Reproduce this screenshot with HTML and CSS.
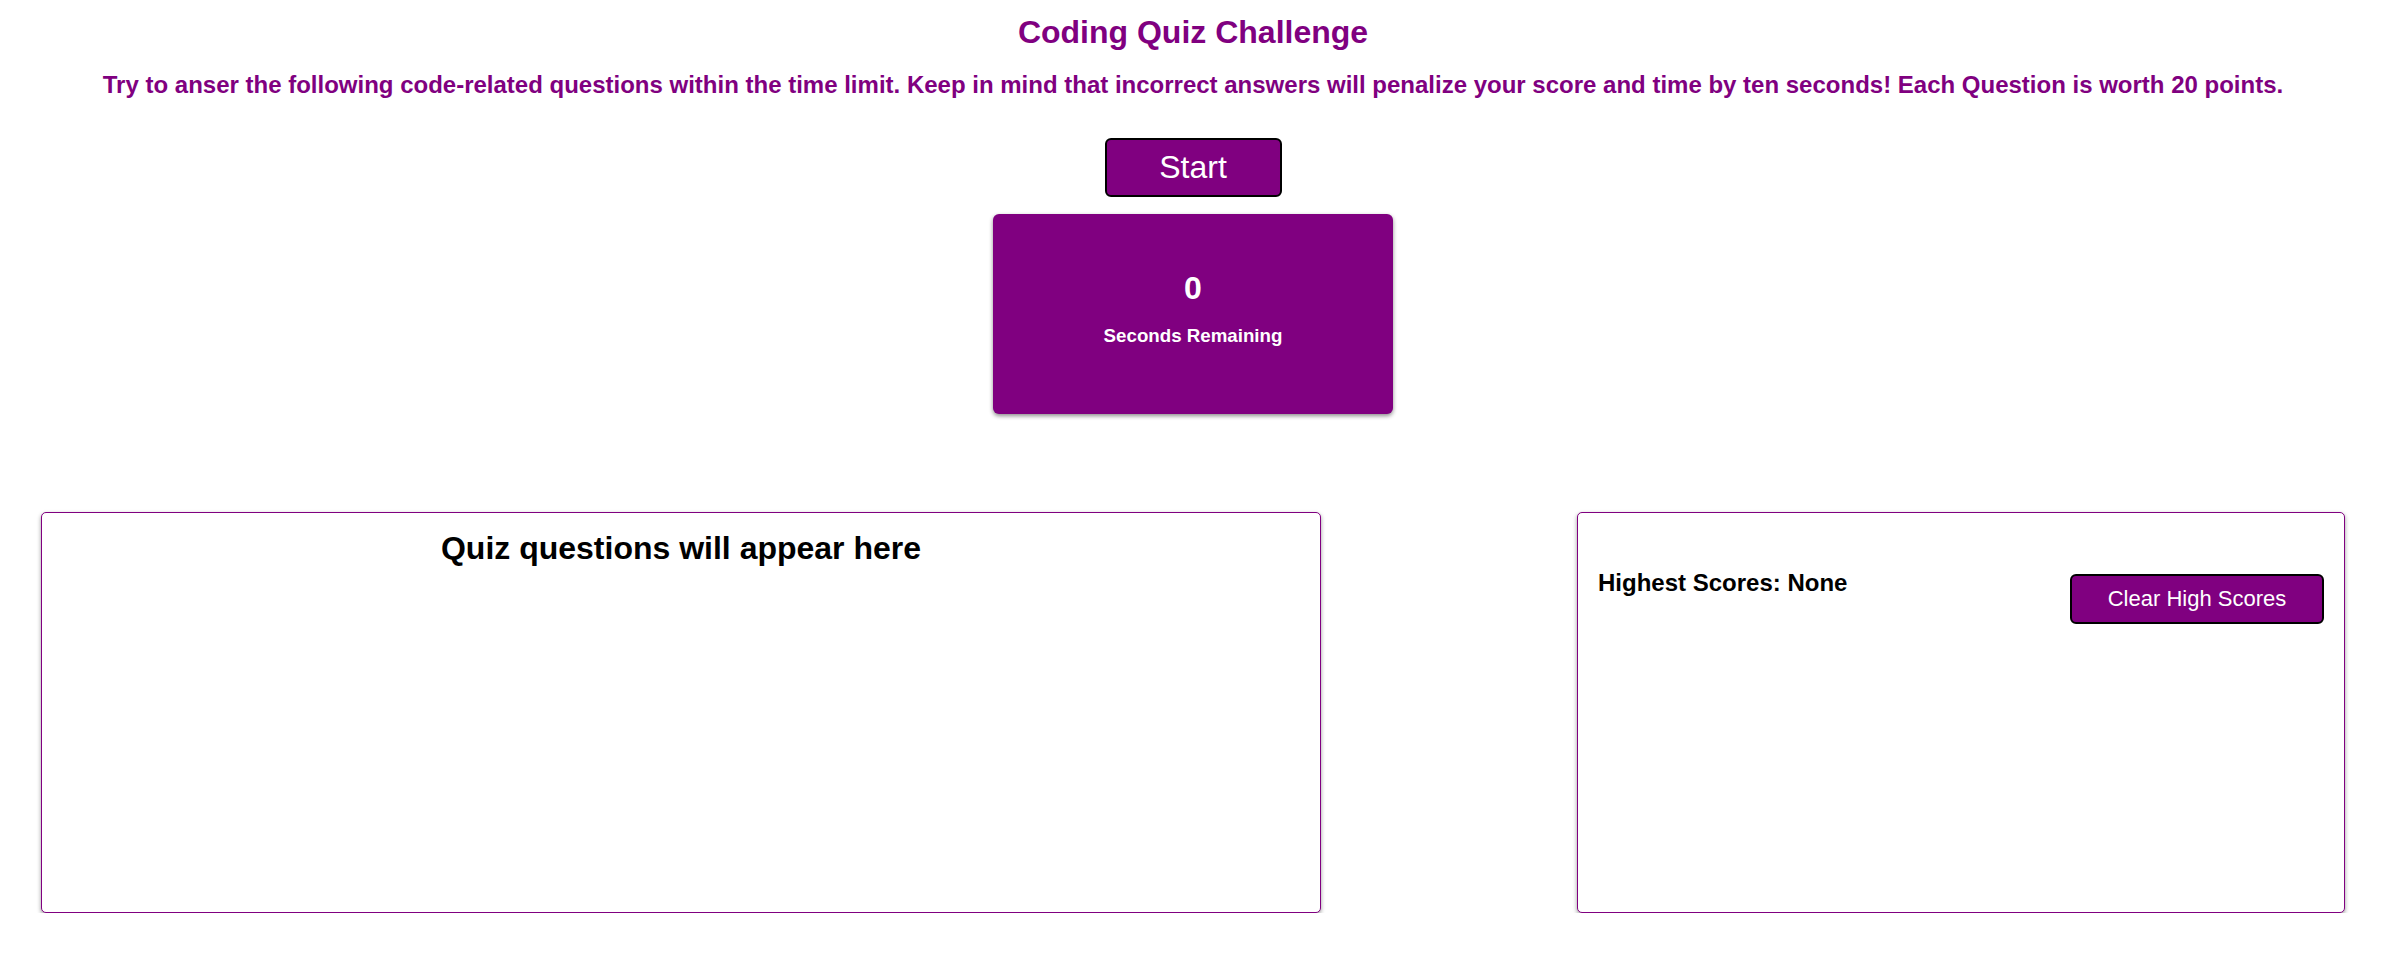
FILE: index.html
```html
<!DOCTYPE html>
<html lang="en">
<head>
<meta charset="utf-8">
<title>Coding Quiz Challenge</title>
<link rel="stylesheet" href="styles.css">
</head>
<body>
<header class="intro">
  <h1 class="title">Coding Quiz Challenge</h1>
  <p class="subtitle">Try to anser the following code-related questions within the time limit. Keep in mind that incorrect answers will penalize your score and time by ten seconds! Each Question is worth 20 points.</p>
  <button class="start-btn">Start</button>
  <div class="timer">
    <div class="timer-count">0</div>
    <div class="timer-label">Seconds Remaining</div>
  </div>
</header>
<main class="panels">
  <section class="quiz-box">
    <h2 class="quiz-heading">Quiz questions will appear here</h2>
  </section>
  <section class="scores-box">
    <h3 class="scores-heading">Highest Scores: None</h3>
    <button class="clear-btn">Clear High Scores</button>
  </section>
</main>
</body>
</html>
```
FILE: styles.css
```css
* { box-sizing: border-box; }

body {
  margin: 0;
  font-family: "Liberation Sans", Arial, sans-serif;
  color: #000;
  background: #fff;
}

.intro {
  display: flex;
  flex-direction: column;
  align-items: center;
  padding-right: 6px;
}

.title {
  margin: 14px 0 0;
  font-size: 32px;
  font-weight: bold;
  color: #800080;
  line-height: 37px;
}

.subtitle {
  margin: 20px 0 0;
  font-size: 24px;
  font-weight: bold;
  color: #800080;
  line-height: 28px;
  white-space: nowrap;
}

.start-btn {
  margin-top: 39px;
  width: 177px;
  height: 59px;
  padding: 0;
  font-family: "Liberation Sans", Arial, sans-serif;
  font-size: 32px;
  color: #fff;
  background: #800080;
  border: 2px solid #000;
  border-radius: 6px;
}

.timer {
  margin-top: 17px;
  width: 400px;
  height: 200px;
  padding-top: 56px;
  background: #800080;
  color: #fff;
  border-radius: 6px;
  box-shadow: 0 2px 4px rgba(0, 0, 0, 0.45);
  text-align: center;
}

.timer-count {
  font-size: 32px;
  font-weight: bold;
  line-height: 37px;
}

.timer-label {
  margin-top: 18px;
  font-size: 18.72px;
  font-weight: bold;
  line-height: 22px;
}

.panels {
  display: flex;
  justify-content: space-between;
  align-items: flex-start;
  padding: 0 47px 0 41px;
  margin-top: 98px;
}

.quiz-box,
.scores-box {
  height: 401px;
  border: 1px solid #800080;
  border-radius: 5px;
  box-shadow: 0 2px 4px rgba(0, 0, 0, 0.4);
  background: #fff;
}

.quiz-box {
  width: 1280px;
}

.quiz-heading {
  margin: 17px 0 0;
  font-size: 32px;
  font-weight: bold;
  text-align: center;
  line-height: 37px;
}

.scores-box {
  width: 768px;
  display: flex;
  justify-content: space-between;
  align-items: flex-start;
  padding: 56px 20px 0;
}

.scores-heading {
  margin: 0;
  font-size: 24px;
  font-weight: bold;
  line-height: 28px;
}

.clear-btn {
  margin-top: 5px;
  width: 254px;
  height: 50px;
  padding: 0;
  font-family: "Liberation Sans", Arial, sans-serif;
  font-size: 22px;
  color: #fff;
  background: #800080;
  border: 2px solid #000;
  border-radius: 6px;
}
```
